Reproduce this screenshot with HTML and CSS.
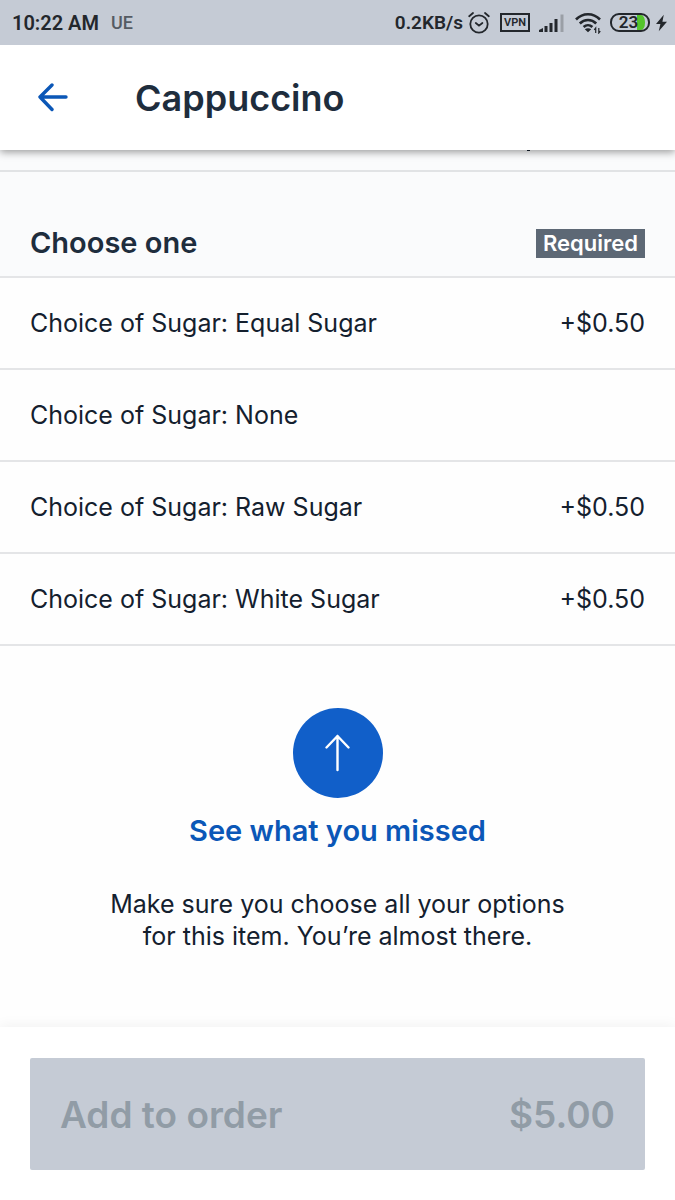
FILE: index.html
```html
<!DOCTYPE html>
<html lang="en">
<head>
    <meta charset="UTF-8">
    <meta name="viewport" content="width=device-width, initial-scale=1.0">
    <title>Cappuccino</title>
    <link rel="stylesheet" href="styles.css">
</head>
<body>
    <div class="statusBar">
        <span class="time">10:22 AM</span>
        <span class="carrier">UE</span>
        <span class="speed">0.2KB/s</span>
        <svg class="alarm" width="22" height="24" viewBox="0 0 22 24" fill="none" stroke="#23272c" stroke-width="1.8" stroke-linecap="round">
            <circle cx="11" cy="13" r="8.7"/>
            <path d="M1.2 5.2 5 2M20.8 5.2 17 2M7.8 12l3.2 2.6 3.4-2.6"/>
        </svg>
        <span class="vpn">VPN</span>
        <svg class="signal" width="25" height="20" viewBox="0 0 25 20" fill="#23272c">
            <path d="M0 19v-2l4-2v4zM5.500 13h3v6h-3zM10.500 10h3v9h-3zM15.500 6h3v13h-3z"/>
            <path d="M21.500 1.500h3V19h-3z" fill="#9a9fa6"/>
        </svg>
        <svg class="wifi" width="26" height="22" viewBox="0 0 26 22" fill="none" stroke="#23272c" stroke-width="2.6">
            <path d="M1 7.500C7.800 .4 18.200 .4 25 7.500M4.800 11.500c4.600-4.600 11.800-4.600 16.400 0M8.600 15c2.600-2.400 6.200-2.400 8.800 0"/>
            <path d="m9.800 17.200 3.200 3 3.200-3c-1.800-1.400-4.600-1.400-6.400 0z" fill="#23272c" stroke="none"/>
            <path d="M20.700 21v-5l-1.500 1.800M23.800 16v5l1.500-1.800" stroke-width="1.200"/>
        </svg>
        <span class="battery">23</span>
        <svg class="bolt" width="11" height="18" viewBox="0 0 12 18" fill="#23272c">
            <path d="M8.500 0 0 10h4.800L3 18l9-10.500H7z"/>
        </svg>
    </div>

    <header class="header">
        <a class="back" href="#" aria-label="Back">
            <svg width="32" height="30" viewBox="0 0 32 30" fill="none" stroke="#0b57b7" stroke-width="3.400" stroke-linecap="round" stroke-linejoin="round">
                <path d="M29 14H3M15 2 3 14l12 12.500"/>
            </svg>
        </a>
        <h1>Cappuccino</h1>
    </header>

    <main>
        <div class="previous"></div>

        <section class="group">
            <div class="groupTitle">
                <h2>Choose one</h2>
                <span class="required">Required</span>
            </div>
            <button type="button" class="option"><span>Choice of Sugar: Equal Sugar</span><span>+$0.50</span></button>
            <button type="button" class="option"><span>Choice of Sugar: None</span></button>
            <button type="button" class="option"><span>Choice of Sugar: Raw Sugar</span><span>+$0.50</span></button>
            <button type="button" class="option"><span>Choice of Sugar: White Sugar</span><span>+$0.50</span></button>
        </section>

        <section class="missed">
            <a class="missedLink" href="#">
                <span class="circle">
                    <svg width="26" height="38" viewBox="0 0 26 38" fill="none" stroke="white" stroke-width="2.400" stroke-linecap="round" stroke-linejoin="round">
                        <path d="M12.500 36V2M1.500 13.500l11-11.500 11 11.500"/>
                    </svg>
                </span>
                See what you missed
            </a>
            <p>Make sure you choose all your options for this item. You’re almost there.</p>
        </section>
    </main>

    <footer class="footer">
        <button type="button" class="addButton" disabled><span>Add to order</span><span>$5.00</span></button>
    </footer>
</body>
</html>
```
FILE: styles.css
```css
* {
    margin: 0;
    padding: 0;
    box-sizing: border-box;
}

body {
    display: flex;
    flex-direction: column;
    min-height: 100vh;
    background: #fefefe;
    color: #14202e;
    font-family: Inter, "Liberation Sans", sans-serif;
}

button {
    border: none;
    font-family: inherit;
    cursor: pointer;
}

.statusBar {
    display: flex;
    align-items: center;
    height: 45px;
    padding: 0 8px 0 12px;
    background: #c5cbd5;
    color: #23272c;
    font-family: Roboto, sans-serif;
    font-size: 20px;
    font-weight: 600;
}

.carrier {
    margin-left: 12px;
    color: #555b63;
    font-size: 18px;
    font-weight: 500;
}

.speed {
    margin-left: auto;
    font-size: 19px;
}

.alarm {
    margin-left: 5px;
}

.vpn {
    margin-left: 10px;
    padding: 0 2px;
    border: 2px solid #23272c;
    font-size: 11px;
    line-height: 15px;
}

.signal {
    margin-left: 9px;
}

.wifi {
    margin-left: 11px;
}

.battery {
    width: 40px;
    margin-left: 9px;
    padding-right: 3px;
    border: 2px solid #23272c;
    border-radius: 9px;
    background: linear-gradient(to right, transparent 75%, #55c52c 75%) content-box;
    font-size: 17px;
    line-height: 15px;
    text-align: center;
}

.bolt {
    margin-left: 6px;
}

.header {
    position: relative;
    display: flex;
    align-items: center;
    gap: 66px;
    height: 105px;
    padding: 0 37px;
    background: white;
    box-shadow: 0 2px 8px #00000066;
    clip-path: inset(0 0 -16px);
}

.back {
    display: flex;
}

h1 {
    color: #1e2d3d;
    font-size: 36px;
    font-weight: 600;
    line-height: 42px;
}

main {
    flex: 1;
}

.previous {
    height: 22px;
    border-bottom: 2px solid #e1e3e5;
    background: #fafbfc;
}

/* end of the text that is scrolled under the header */
.previous::before {
    content: "";
    display: block;
    width: 3px;
    height: 1px;
    margin-left: 78%;
    background: #14202e;
}

.groupTitle {
    display: flex;
    align-items: flex-end;
    justify-content: space-between;
    height: 106px;
    padding: 0 30px 18px;
    border-bottom: 2px solid #e4e5e7;
    background: #fafbfc;
}

h2 {
    color: #1e2d3d;
    font-size: 29px;
    font-weight: 600;
    line-height: 30px;
}

.required {
    padding: 0 7px;
    background: #5d6875;
    color: white;
    font-size: 22px;
    font-weight: 600;
    line-height: 29px;
}

.option {
    display: flex;
    align-items: center;
    justify-content: space-between;
    width: 100%;
    height: 92px;
    padding: 0 30px;
    border-bottom: 2px solid #e4e5e7;
    background: none;
    color: #14202e;
    font-size: 25px;
    font-weight: 400;
}

.missed {
    display: flex;
    flex-direction: column;
    align-items: center;
    padding: 62px 30px;
    text-align: center;
}

.missedLink {
    display: flex;
    flex-direction: column;
    align-items: center;
    gap: 15px;
    color: #0b57b7;
    font-size: 29px;
    font-weight: 600;
    line-height: 36px;
    text-decoration: none;
}

.circle {
    display: flex;
    align-items: center;
    justify-content: center;
    width: 90px;
    height: 90px;
    border-radius: 50%;
    background: #115fc9;
}

.missed p {
    max-width: 480px;
    margin-top: 39px;
    font-size: 25px;
    line-height: 32px;
}

.footer {
    padding: 31px 30px 30px;
    background: white;
    box-shadow: 0 -2px 12px #0000000d;
}

.addButton {
    display: flex;
    align-items: center;
    justify-content: space-between;
    width: 100%;
    height: 112px;
    padding: 0 30px;
    border-radius: 2px;
    background: #c5cbd5;
    color: #919ca6;
    font-size: 37px;
    font-weight: 600;
}
```
